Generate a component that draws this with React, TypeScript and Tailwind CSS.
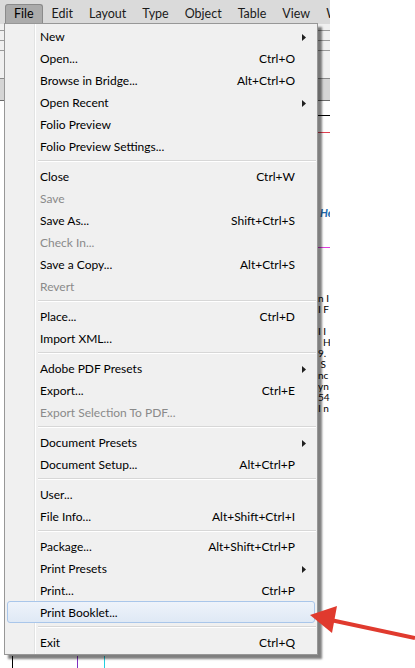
import React from 'react';

type Item =
  | { sep: true }
  | { sep?: false; label: string; shortcut?: string; sub?: boolean; disabled?: boolean; active?: boolean };

const items: Item[] = [
  { label: 'New', sub: true },
  { label: 'Open...', shortcut: 'Ctrl+O' },
  { label: 'Browse in Bridge...', shortcut: 'Alt+Ctrl+O' },
  { label: 'Open Recent', sub: true },
  { label: 'Folio Preview' },
  { label: 'Folio Preview Settings...' },
  { sep: true },
  { label: 'Close', shortcut: 'Ctrl+W' },
  { label: 'Save', disabled: true },
  { label: 'Save As...', shortcut: 'Shift+Ctrl+S' },
  { label: 'Check In...', disabled: true },
  { label: 'Save a Copy...', shortcut: 'Alt+Ctrl+S' },
  { label: 'Revert', disabled: true },
  { sep: true },
  { label: 'Place...', shortcut: 'Ctrl+D' },
  { label: 'Import XML...' },
  { sep: true },
  { label: 'Adobe PDF Presets', sub: true },
  { label: 'Export...', shortcut: 'Ctrl+E' },
  { label: 'Export Selection To PDF...', disabled: true },
  { sep: true },
  { label: 'Document Presets', sub: true },
  { label: 'Document Setup...', shortcut: 'Alt+Ctrl+P' },
  { sep: true },
  { label: 'User...' },
  { label: 'File Info...', shortcut: 'Alt+Shift+Ctrl+I' },
  { sep: true },
  { label: 'Package...', shortcut: 'Alt+Shift+Ctrl+P' },
  { label: 'Print Presets', sub: true },
  { label: 'Print...', shortcut: 'Ctrl+P' },
  { label: 'Print Booklet...', active: true },
  { sep: true },
  { label: 'Exit', shortcut: 'Ctrl+Q' },
];

const menus = ['Edit', 'Layout', 'Type', 'Object', 'Table', 'View', 'W'];

function MenuRow({ item }: { item: Item }) {
  if (item.sep) {
    return (
      <div className="h-[8px] flex flex-col justify-center pl-[33px] pr-[1px]">
        <div className="h-px bg-[#d7d7d7]" />
        <div className="h-px bg-white" />
      </div>
    );
  }
  return (
    <div
      className={
        'h-[22px] flex items-center pt-[2px] mx-[2px] rounded-[3px] border ' +
        (item.active
          ? 'bg-gradient-to-b from-[#eef3fa] to-[#dfe9f5] border-[#a9c6ea]'
          : 'border-transparent')
      }
    >
      <span
        className={
          'pl-[32px] flex-1 whitespace-nowrap ' +
          (item.disabled ? 'text-[#8a8a8a]' : 'text-black')
        }
      >
        {item.label}
      </span>
      {item.shortcut && <span className="whitespace-nowrap text-black">{item.shortcut}</span>}
      <span className="w-[19px] flex items-center justify-end pr-[8px]">
        {item.sub && (
          <svg width="4" height="7" viewBox="0 0 4 7">
            <path d="M0 0 L4 3.5 L0 7 Z" fill="#202020" />
          </svg>
        )}
      </span>
    </div>
  );
}

export default function App() {
  return (
    <div
      className="relative w-[415px] h-[668px] bg-white overflow-hidden text-[12px] leading-none"
      style={{ fontFamily: 'Lato, "Noto Sans", sans-serif' }}
    >
      {/* background application window */}
      <div className="w-[330px] h-full flex flex-col overflow-hidden">
        <div className="h-[24px] bg-[#dadada] flex items-end pl-[5px] gap-[2px] text-[12.5px]">
          <div className="h-[20px] px-[8px] flex items-center bg-[#ababab] border border-b-0 border-[#8a8a8a] rounded-t-[3px] text-black">
            File
          </div>
          {menus.map((m) => (
            <div key={m} className="h-[20px] px-[7px] flex items-center text-[#1a1a1a]">
              {m}
            </div>
          ))}
        </div>
        <div className="flex-1 flex flex-col">
          <div className="h-[55px] bg-[#f0f0f0] border-b border-[#8a8a8a] flex flex-col gap-[9px] pt-[6px]">
            <div className="h-px bg-[#9a9a9a]" />
            <div className="h-px bg-[#9a9a9a]" />
            <div className="h-px bg-[#9a9a9a]" />
          </div>
          <div className="h-[22px] bg-[#d5d5d5] border-b border-[#6a6a6a]" />
          <div className="flex-1 bg-white relative">
            <div className="absolute left-[320px] top-[106px] text-[11px] font-bold italic text-[#1e6bb0]">He</div>
            <div className="absolute left-[318px] top-[146px] w-[12px] h-px bg-[#e040e0]" />
            <div className="absolute left-[318px] top-[31px] w-[12px] h-px bg-[#e04050]" />
            <div className="absolute left-[318px] top-[14px] w-[12px] h-px bg-black" />
            <div className="absolute left-[318px] top-[192px] text-[10px] leading-[11px] text-black whitespace-pre">
              {'n I\nI F\n\nI I\n  H\n9.\n S\nnc\nyn\n54\nI n'}
            </div>
            <div className="absolute left-[12px] bottom-0 w-px h-[12px] bg-black" />
            <div className="absolute left-[77px] bottom-0 w-px h-[12px] bg-[#8030c0]" />
            <div className="absolute left-[104px] bottom-0 w-px h-[12px] bg-[#20d0e0]" />
          </div>
        </div>
      </div>

      {/* File menu */}
      <div className="absolute left-[4px] top-[23px] w-[314px] bg-[#f0f0f0] border border-[#979797] py-[1px] shadow-[4px_4px_2px_rgba(0,0,0,0.5)]">
        <div className="absolute left-[29px] top-0 bottom-0 w-px bg-[#e2e3e3]" />
        <div className="absolute left-[30px] top-0 bottom-0 w-px bg-white" />
        <div className="relative flex flex-col">
          {items.map((it, i) => (
            <MenuRow key={i} item={it} />
          ))}
        </div>
      </div>

      {/* red arrow */}
      <svg className="absolute left-0 top-0" width="415" height="668" viewBox="0 0 415 668">
        <line x1="415" y1="638" x2="326" y2="619" stroke="#e03a2e" strokeWidth="4" />
        <path d="M310 615 L337 606 L332 633 Z" fill="#e03a2e" />
      </svg>
    </div>
  );
}
